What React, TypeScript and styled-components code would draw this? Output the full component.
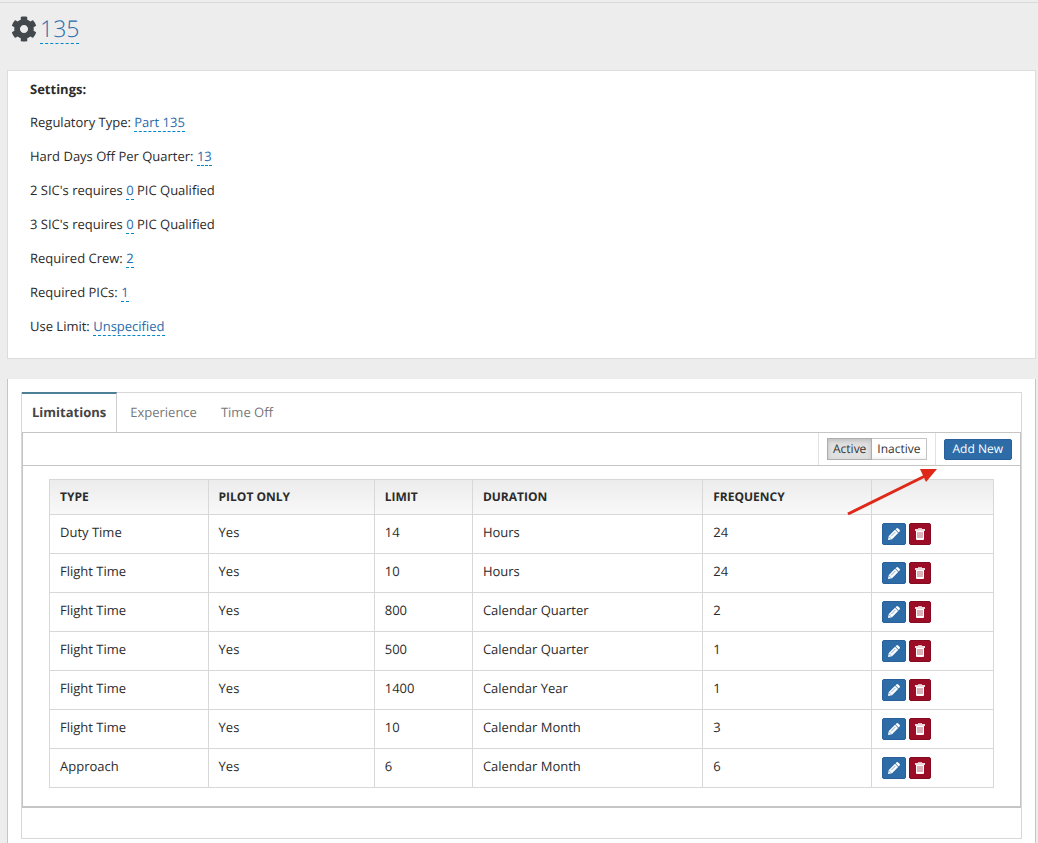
import React, { useState } from "react";
import styled, { createGlobalStyle, css } from "styled-components";
import { FaCog } from "react-icons/fa";

const GlobalStyle = createGlobalStyle`
  *, *::before, *::after { box-sizing: border-box; }
  body {
    margin: 0;
    background: #ededed;
    color: #2b2b2b;
    font: 13px/20px "Open Sans", "Noto Sans", sans-serif;
    text-rendering: geometricPrecision;
  }
  button { font-family: inherit; text-rendering: inherit; cursor: pointer; }
`;

const Page = styled.div`
  margin-top: 2px;
  border-top: 1px solid #dadada;
  padding: 0 2px 0 7px;
`;

const PageHeader = styled.header`
  display: flex;
  align-items: center;
  gap: 3px;
  padding: 10px 4px 26px;
  color: #43484c;
`;

const Title = styled.h1`
  margin: 0;
  font-size: 23px;
  font-weight: 300;
  line-height: 30px;
`;

const EditableLink = styled.a`
  display: inline-block;
  line-height: inherit;
  color: #2a6cab;
  text-decoration: none;
  border-bottom: 1px dashed #0088cc;
`;

const SettingsCard = styled.section`
  padding: 8px 22px 7px;
  background: #fff;
  border: 1px solid #dcdcdc;
`;

const SettingsTitle = styled.h2`
  margin: 0 0 14px;
  font-size: 13px;
  font-weight: 700;
  line-height: 20px;
`;

const SettingsList = styled.ul`
  margin: 0;
  padding: 0;
  list-style: none;
`;

const SettingsItem = styled.li`
  height: 20px;
  margin-bottom: 14px;
  line-height: 18px;
`;

const Panel = styled.section`
  margin-top: 20px;
  padding: 13px 13px 20px;
  background: #fff;
  border: solid #c5c5c5;
  border-width: 0 1px;
`;

const TabBox = styled.div`
  border: 1px solid #d8d8d8;
  padding-bottom: 30px;
`;

const TabBar = styled.div`
  display: flex;
  margin-top: -1px;
  padding-right: 8px;
`;

const Tab = styled.button<{ $active: boolean }>`
  height: 40px;
  padding: 0 11px 2px 13px;
  background: #fff;
  border: 0;
  border-top: 1px solid #d8d8d8;
  color: #777;
  font-size: 13px;
  line-height: 20px;

  ${(p) =>
    p.$active &&
    css`
      padding: 0 10px 2px;
      border-top: 2px solid #4c7f96;
      border-right: 1px solid #d0d0d0;
      color: #444;
      font-weight: 700;
    `}
`;

const TabPanel = styled.div`
  position: relative;
  border: 1px solid #c5c5c5;
  border-bottom-width: 2px;
`;

const Toolbar = styled.div`
  display: flex;
  justify-content: flex-end;
  height: 33px;
  border-bottom: 1px solid #c5c5c5;
`;

const ToolGroup = styled.div`
  display: flex;
  align-items: center;
  padding: 0 8px;
  border-left: 1px solid #e2e2e2;
`;

const ToggleButton = styled.button<{ $pressed: boolean }>`
  height: 22px;
  padding: 0 5px;
  border: 1px solid #c4c4c4;
  background: linear-gradient(#fff 80%, #f2f2f2);
  color: #333;
  font-size: 12px;
  line-height: 18px;

  & + & { border-left: 0; }

  ${(p) =>
    p.$pressed &&
    css`
      border-color: #adadad;
      background: #e0e0e0;
      box-shadow: inset 0 2px 4px rgba(0, 0, 0, 0.15);
    `}
`;

const AddButton = styled.button`
  height: 21px;
  padding: 0 8px;
  border: 1px solid #27609a;
  border-radius: 2px;
  background: #2d6ca7;
  color: #fff;
  font-size: 12px;
  line-height: 18px;
`;

const TableWrap = styled.div`
  padding: 13px 26px 18px;
`;

const Table = styled.table`
  width: 100%;
  table-layout: fixed;
  border-collapse: collapse;
  font-size: 13px;
`;

const Column = styled.col<{ $share: number }>`
  width: ${(p) => p.$share}%;
`;

const HeadRow = styled.tr`
  background: linear-gradient(#ececec, #f9f9f9);
`;

const HeadCell = styled.th`
  height: 35px;
  padding: 0 10px;
  border: 1px solid #d8d8d8;
  font-size: 12px;
  font-weight: 700;
  text-align: left;
  text-transform: uppercase;
`;

const Cell = styled.td`
  height: 39px;
  padding: 7px 10px 8px;
  border: 1px solid #d8d8d8;
  line-height: 20px;
  vertical-align: top;
`;

const Actions = styled.div`
  display: flex;
  gap: 3px;
  padding-top: 1px;
`;

const IconButton = styled.button<{ $danger?: boolean }>`
  display: flex;
  align-items: center;
  justify-content: center;
  width: ${(p) => (p.$danger ? 22 : 24)}px;
  height: 22px;
  padding: 0;
  border: 1px solid ${(p) => (p.$danger ? "#840a20" : "#27609a")};
  border-radius: 2px;
  background: ${(p) => (p.$danger ? "#9b0d27" : "#2d6ca7")};
  color: #fff;
`;

const Arrow = styled.svg`
  position: absolute;
  top: 34px;
  right: 81px;
  pointer-events: none;
`;

function PencilIcon() {
  return (
    <svg width="12" height="12" viewBox="0 0 12 12" aria-hidden>
      <path
        d="M0 12 .8 8 7 1.8 10.2 5 4 11.2z"
        fill="currentColor"
      />
      <path
        d="M7.5 1.3 8.4.4Q9.3-.3 10.2.5L11.5 1.8Q12.3 2.7 11.6 3.6L10.7 4.5z"
        fill="currentColor"
      />
      <path d="M3 8.4 7.4 4" stroke="#2d6ca7" strokeWidth=".6" />
      <path d="M1.5 9.2 2.8 10.5" stroke="#2d6ca7" strokeWidth=".7" />
    </svg>
  );
}

function TrashIcon() {
  return (
    <svg width="12" height="12" viewBox="0 0 12 12" aria-hidden>
      <path d="M4 0h4v1H4z" fill="currentColor" opacity=".7" />
      <path d="M1 1h10v2H1z" fill="currentColor" opacity=".85" />
      <path d="M2 3h8v8q0 1-1 1H3q-1 0-1-1z" fill="currentColor" />
      <path
        d="M3 4h1v6H3zM5 4h1v6H5zM7 4h1v6H7z"
        transform="translate(.5)"
        fill="#9b0d27"
        opacity=".65"
      />
    </svg>
  );
}

type Setting = { before: string; value: string; after?: string };

const settings: Setting[] = [
  { before: "Regulatory Type:", value: "Part 135" },
  { before: "Hard Days Off Per Quarter:", value: "13" },
  { before: "2 SIC's requires", value: "0", after: "PIC Qualified" },
  { before: "3 SIC's requires", value: "0", after: "PIC Qualified" },
  { before: "Required Crew:", value: "2" },
  { before: "Required PICs:", value: "1" },
  { before: "Use Limit:", value: "Unspecified" },
];

const tabs = ["Limitations", "Experience", "Time Off"];

const columns = [
  { label: "Type", share: 16.8 },
  { label: "Pilot Only", share: 17.6 },
  { label: "Limit", share: 10.4 },
  { label: "Duration", share: 24.4 },
  { label: "Frequency", share: 17.9 },
  { label: "", share: 12.9 },
];

const limitations = [
  ["Duty Time", "Yes", "14", "Hours", "24"],
  ["Flight Time", "Yes", "10", "Hours", "24"],
  ["Flight Time", "Yes", "800", "Calendar Quarter", "2"],
  ["Flight Time", "Yes", "500", "Calendar Quarter", "1"],
  ["Flight Time", "Yes", "1400", "Calendar Year", "1"],
  ["Flight Time", "Yes", "10", "Calendar Month", "3"],
  ["Approach", "Yes", "6", "Calendar Month", "6"],
];

export default function App() {
  const [tab, setTab] = useState("Limitations");
  const [status, setStatus] = useState("Active");

  return (
    <>
      <GlobalStyle />
      <Page>
        <PageHeader>
          <FaCog size={26} aria-hidden />
          <Title>
            <EditableLink href="#name">135</EditableLink>
          </Title>
        </PageHeader>

        <SettingsCard>
          <SettingsTitle>Settings:</SettingsTitle>
          <SettingsList>
            {settings.map((s) => (
              <SettingsItem key={s.before}>
                {s.before} <EditableLink href="#edit">{s.value}</EditableLink>
                {s.after && ` ${s.after}`}
              </SettingsItem>
            ))}
          </SettingsList>
        </SettingsCard>

        <Panel>
          <TabBox>
            <TabBar role="tablist">
              {tabs.map((t) => (
                <Tab
                  key={t}
                  role="tab"
                  aria-selected={t === tab}
                  $active={t === tab}
                  onClick={() => setTab(t)}
                >
                  {t}
                </Tab>
              ))}
            </TabBar>
            <TabPanel role="tabpanel">
              <Toolbar>
                <ToolGroup>
                  {["Active", "Inactive"].map((s) => (
                    <ToggleButton
                      key={s}
                      aria-pressed={s === status}
                      $pressed={s === status}
                      onClick={() => setStatus(s)}
                    >
                      {s}
                    </ToggleButton>
                  ))}
                </ToolGroup>
                <ToolGroup>
                  <AddButton>Add New</AddButton>
                </ToolGroup>
              </Toolbar>
              <TableWrap>
                <Table>
                  <colgroup>
                    {columns.map((c) => (
                      <Column key={c.label} $share={c.share} />
                    ))}
                  </colgroup>
                  <thead>
                    <HeadRow>
                      {columns.map((c) => (
                        <HeadCell key={c.label}>{c.label}</HeadCell>
                      ))}
                    </HeadRow>
                  </thead>
                  <tbody>
                    {limitations.map((row, i) => (
                      <tr key={i}>
                        {row.map((value, j) => (
                          <Cell key={j}>{value}</Cell>
                        ))}
                        <Cell>
                          <Actions>
                            <IconButton aria-label="Edit">
                              <PencilIcon />
                            </IconButton>
                            <IconButton $danger aria-label="Delete">
                              <TrashIcon />
                            </IconButton>
                          </Actions>
                        </Cell>
                      </tr>
                    ))}
                  </tbody>
                </Table>
              </TableWrap>
              <Arrow width="92" height="50" viewBox="0 0 92 50" aria-hidden>
                <path d="M1 47 78 9" stroke="#df2818" strokeWidth="3" />
                <path d="M73 2h17L79 15z" fill="#df2818" />
              </Arrow>
            </TabPanel>
          </TabBox>
        </Panel>
      </Page>
    </>
  );
}
